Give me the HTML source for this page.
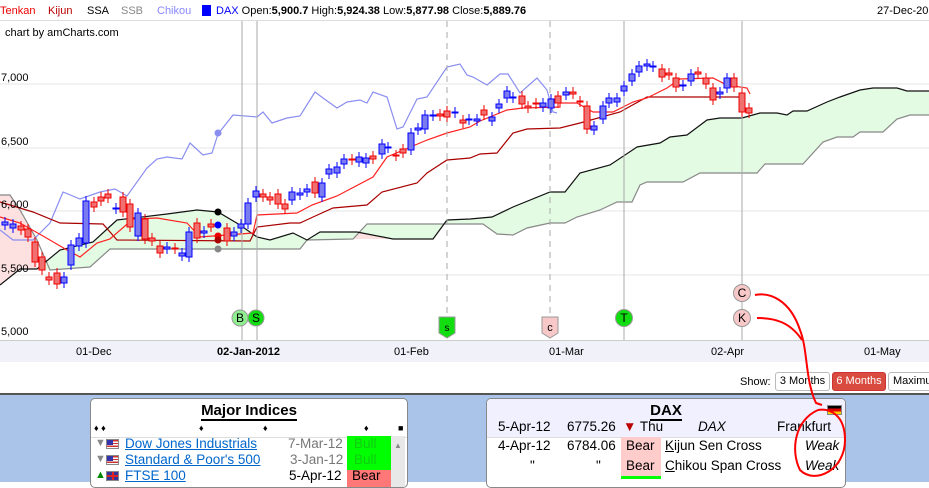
<!DOCTYPE html>
<html><head><meta charset="utf-8">
<style>
*{margin:0;padding:0;box-sizing:border-box}
body{width:929px;height:482px;overflow:hidden;background:#fff;font-family:"Liberation Sans",sans-serif;position:relative}
.top{position:absolute;left:0;top:0;width:929px;height:21px;border-bottom:1px solid #ddd;font-size:11px;line-height:22px;white-space:nowrap}
.top span{position:absolute;top:0}
.lbl{position:absolute;font-size:11px;color:#000}
.axis{position:absolute;left:0;top:340px;width:929px;height:22px;background:#f1f1fa;border-top:1px solid #ccc}
.blue{position:absolute;left:0;top:393px;width:929px;height:89px;background:#a9c4e8;border-top:2px solid #555}
.panel{position:absolute;background:#fff;border:1px solid #888;border-radius:5px;top:398px;height:90px;overflow:hidden;font-size:13.5px}
.panel div{position:absolute;white-space:nowrap}
.btn{position:absolute;top:372px;height:19px;border:1px solid #bbb;border-radius:3px;font-size:11px;line-height:17px;text-align:center;background:#fff}
.us{width:13px;height:10px;background:repeating-linear-gradient(#c33 0 1.4px,#fff 1.4px 2.8px);border:1px solid #888}
.us::before{content:"";position:absolute;left:0;top:0;width:6px;height:5px;background:#33a}
.uk{width:13px;height:10px;background:#339;border:1px solid #888}
.uk::before{content:"";position:absolute;left:5px;top:0;width:2px;height:8px;background:#d22}
.uk::after{content:"";position:absolute;left:0;top:3px;width:11px;height:2px;background:#d22}
</style></head><body>
<div class="top">
<span style="left:0;color:#e00">Tenkan</span>
<span style="left:48px;color:#b00">Kijun</span>
<span style="left:87px">SSA</span>
<span style="left:121px;color:#888">SSB</span>
<span style="left:157px;color:#88f">Chikou</span>
<span style="left:202px;top:5px;width:9px;height:11px;background:#00f"></span>
<span style="left:216px"><span style="position:static;color:#00f">DAX</span> Open:<b>5,900.7</b> High:<b>5,924.38</b> Low:<b>5,877.98</b> Close:<b>5,889.76</b></span>
<span style="left:877px">27-Dec-201</span>
</div>
<div class="lbl" style="left:5px;top:27px">chart by amCharts.com</div>
<svg style="position:absolute;left:0;top:21px" width="929" height="320" viewBox="0 21 929 320">
<g stroke="#e4e4e4"><line x1="0" y1="84" x2="929" y2="84"/><line x1="0" y1="148" x2="929" y2="148"/><line x1="0" y1="211" x2="929" y2="211"/><line x1="0" y1="275" x2="929" y2="275"/></g>
<polygon fill="#fde0e0" points="0,195 10,195 20,210 37,240 37,269 20,269 0,285"/>
<polygon fill="#fde0e0" points="353,239 367,224 470,224 460,219 447,220 433,239"/>
<polygon fill="#e3fbe3" points="37,269 60,250 93,242 117,220 167,214 197,210 218,212 240,225 257,237 270,240 293,233 307,240 320,232 357,232 393,239 433,239 447,220 470,219 492,217 513,207 550,192 565,192 580,173 610,165 637,147 660,143 670,137 687,135 707,120 720,118 742,118 760,113 777,113 787,115 793,111 807,111 827,102 840,97 860,90 873,88 897,88 907,91 929,91 929,115 910,115 897,119 883,132 860,132 853,137 837,137 823,142 803,164 765,164 757,173 700,173 683,182 647,182 640,185 632,202 617,202 600,210 577,217 565,223 550,223 527,228 513,235 497,234 483,224 367,224 353,239 307,240 300,249 110,249 90,267 50,270"/>
<polyline fill="none" stroke="#888" stroke-width="1.2" points="0,195 10,195 20,210 37,240 50,270 90,267 110,249 300,249 307,240 353,239 367,224 483,224 497,234 513,235 527,228 550,223 565,223 577,217 600,210 617,202 632,202 640,185 647,182 683,182 700,173 757,173 765,164 803,164 823,142 837,137 853,137 860,132 883,132 897,119 910,115 929,115"/>
<polyline fill="none" stroke="#111" stroke-width="1.2" points="0,285 20,269 37,269 60,250 93,242 117,220 167,214 197,210 218,212 240,225 257,237 270,240 293,233 307,240 320,232 357,232 393,239 433,239 447,220 470,219 492,217 513,207 550,192 565,192 580,173 610,165 637,147 660,143 670,137 687,135 707,120 720,118 742,118 760,113 777,113 787,115 793,111 807,111 827,102 840,97 860,90 873,88 897,88 907,91 929,91"/>
<polyline fill="none" stroke="#8a8ef0" stroke-width="1.2" points="0,230 13,240 33,240 50,223 63,192 80,199 100,192 115,189 127,196 147,168 157,159 167,157 182,159 190,143 203,155 212,153 218,134 233,115 257,117 263,112 272,123 287,118 300,116 315,92 323,98 337,108 347,102 360,100 367,103 373,92 387,97 397,129 403,127 417,99 427,97 447,67 460,64 467,75 473,77 487,85 500,74 508,74 520,93 537,78 547,90 553,112 557,113"/>
<polyline fill="none" stroke="#a00" stroke-width="1.2" points="0,202 33,212 60,223 103,224 117,240 250,241 257,227 290,223 300,223 313,217 333,208 367,205 382,192 417,183 427,173 447,160 470,158 480,154 497,153 513,133 527,129 560,128 580,123 620,112 647,97 740,97"/>
<polyline fill="none" stroke="#f22" stroke-width="1.2" points="0,217 20,223 43,236 67,250 80,257 97,243 110,239 133,219 157,218 187,223 200,237 253,233 257,215 297,213 312,205 337,196 373,177 387,157 427,140 447,133 470,127 480,121 507,110 523,108 560,107 560,103 577,103 593,112 613,112 633,102 647,98 667,88 680,79 713,78 727,85 747,88 750,94"/>
<g stroke="#aaa"><line x1="242" y1="21" x2="242" y2="340"/><line x1="257" y1="21" x2="257" y2="340"/><line x1="624" y1="21" x2="624" y2="340"/><line x1="742" y1="21" x2="742" y2="340"/><line x1="447" y1="21" x2="447" y2="340" stroke-dasharray="6,5"/><line x1="550" y1="21" x2="550" y2="340" stroke-dasharray="6,5"/></g>
<g id="cd"></g>
<circle cx="218" cy="133" r="3.5" fill="#8a8ef0"/>
<circle cx="218" cy="212" r="3.5" fill="#000"/><circle cx="218" cy="225" r="3.5" fill="#00f"/><circle cx="218" cy="236" r="3.5" fill="#e00"/><circle cx="218" cy="240" r="3.5" fill="#a00"/><circle cx="218" cy="249" r="3.5" fill="#888"/>
<g font-size="12" text-anchor="middle" font-family="Liberation Sans">
<circle cx="240" cy="318" r="8" fill="#90ee90" stroke="#999"/><text x="240" y="322">B</text>
<circle cx="256" cy="318" r="8" fill="#11dd11" stroke="#999"/><text x="256" y="322">S</text>
<circle cx="624" cy="318" r="8.5" fill="#11dd11" stroke="#999"/><text x="624" y="322">T</text>
<circle cx="742" cy="293" r="8.5" fill="#f8c8c8" stroke="#999"/><text x="742" y="297">C</text>
<circle cx="742" cy="318" r="8.5" fill="#f8c8c8" stroke="#999"/><text x="742" y="322">K</text>
<polygon points="439,317 455,317 455,333 447,338 439,333" fill="#11dd11" stroke="#999"/><text x="447" y="331" font-size="10">s</text>
<polygon points="542,317 558,317 558,333 550,338 542,333" fill="#f8c8c8" stroke="#999"/><text x="550" y="331" font-size="11">c</text>
</g>
<g font-size="11" font-family="Liberation Sans"><text x="1" y="81">7,000</text><text x="1" y="145">6,500</text><text x="1" y="208">6,000</text><text x="1" y="272">5,500</text><text x="1" y="335">5,000</text></g>
</svg>
<div class="axis"></div>
<div class="lbl" style="left:76px;top:346px">01-Dec</div>
<div class="lbl" style="left:217px;top:346px;font-weight:bold">02-Jan-2012</div>
<div class="lbl" style="left:394px;top:346px">01-Feb</div>
<div class="lbl" style="left:549px;top:346px">01-Mar</div>
<div class="lbl" style="left:711px;top:346px">02-Apr</div>
<div class="lbl" style="left:864px;top:346px">01-May</div>
<div class="lbl" style="left:740px;top:376px">Show:</div>
<div class="btn" style="left:775px;width:55px">3 Months</div>
<div class="btn" style="left:832px;width:54px;background:#d84b3e;color:#fff;border-color:#c33">6 Months</div>
<div class="btn" style="left:888px;width:50px;text-align:left;padding-left:4px">Maximum</div>
<div class="blue"></div>
<div class="panel" style="left:90px;width:318px">
<div style="left:0;width:316px;top:3px;text-align:center;font-size:15px;font-weight:bold"><span style="border-bottom:2px solid #000">Major Indices</span></div>
<div style="left:3px;top:24px;font-size:9px">♦ ♦</div><div style="left:108px;top:24px;font-size:9px">♦</div><div style="left:172px;top:24px;font-size:9px">♦</div><div style="left:273px;top:24px;font-size:9px">♦</div><div style="left:307px;top:24px;font-size:9px">■</div>
<div style="left:0;top:38px;width:316px;border-top:1px solid #ddd;height:1px"></div>
<div style="left:256px;top:37px;width:44px;height:34px;background:#0f0"></div>
<div style="left:256px;top:71px;width:44px;height:20px;background:#f77"></div>
<div style="left:300px;top:37px;width:14px;height:55px;background:#e8e8e8"></div>
<div style="left:4px;top:38px;color:#888;font-size:11px">▼</div><div class="us" style="left:15px;top:40px"></div>
<div style="left:4px;top:54px;color:#888;font-size:11px">▼</div><div class="us" style="left:15px;top:56px"></div>
<div style="left:4px;top:70px;color:#080;font-size:11px">▲</div><div class="uk" style="left:15px;top:72px"></div>
<div style="left:34px;top:37px;color:#06c;text-decoration:underline">Dow Jones Industrials</div>
<div style="left:34px;top:53px;color:#06c;text-decoration:underline">Standard &amp; Poor's 500</div>
<div style="left:34px;top:69px;color:#06c;text-decoration:underline">FTSE 100</div>
<div style="left:197px;top:37px;color:#777">7-Mar-12</div>
<div style="left:199px;top:53px;color:#777">3-Jan-12</div>
<div style="left:198px;top:69px">5-Apr-12</div>
<div style="left:263px;top:37px;color:#1c1">Bull</div>
<div style="left:263px;top:53px;color:#1c1">Bull</div>
<div style="left:261px;top:69px">Bear</div>
<div style="left:303px;top:42px;font-size:8px;color:#888">▲</div>
</div>
<div class="panel" style="left:486px;width:360px">
<div style="left:0;top:0;width:360px;height:38px;background:#f0f0ff"></div>
<div style="left:0;width:358px;top:3px;text-align:center;font-size:15px;font-weight:bold"><span style="border-bottom:2px solid #000">DAX</span></div>
<div style="right:3px;top:6px;width:15px;height:10px;background:linear-gradient(#000 33%,#d00 33%,#d00 66%,#fc0 66%);border:1px solid #888"></div>
<div style="left:0;top:38px;width:360px;border-top:1px solid #ddd;height:1px"></div>
<div style="left:11px;top:20px">5-Apr-12</div>
<div style="left:80px;top:20px">6775.26</div>
<div style="left:136px;top:20px"><span style="color:#b00">▼</span> Thu</div>
<div style="left:211px;top:20px;font-style:italic">DAX</div>
<div style="left:290px;top:20px">Frankfurt</div>
<div style="left:134px;top:38px;width:40px;height:40px;background:#fcc"></div>
<div style="left:134px;top:77px;width:40px;height:3px;background:#0f0"></div>
<div style="left:11px;top:39px">4-Apr-12</div>
<div style="left:80px;top:39px">6784.06</div>
<div style="left:139px;top:39px">Bear</div>
<div style="left:178px;top:39px"><u>K</u>ijun Sen Cross</div>
<div style="left:318px;top:39px;font-style:italic">Weak</div>
<div style="left:43px;top:59px">"</div>
<div style="left:109px;top:59px">"</div>
<div style="left:139px;top:59px">Bear</div>
<div style="left:178px;top:59px"><u>C</u>hikou Span Cross</div>
<div style="left:318px;top:59px;font-style:italic">Weak</div>
</div>
<svg style="position:absolute;left:0;top:0" width="929" height="482"><g fill="none" stroke="#f00" stroke-width="2"><path d="M755,295 C770,292 790,300 800,330 C808,350 805,380 816,403 L822,405"/><path d="M757,318 C775,318 790,322 802,340"/><path d="M818,410 C795,420 790,450 800,470 C815,485 845,470 845,440 C845,415 830,408 818,410"/></g></svg>
<script>
var c=[[5,222,225,'b'],[13,224,228,'b'],[21,226,230,'r'],[28,229,237,'r'],[35,242,262,'r'],[42,257,270,'r'],[49,277,280,'r'],[57,273,284,'r'],[64,277,283,'b'],[71,245,265,'b'],[79,238,246,'b'],[86,201,243,'b'],[94,202,207,'r'],[101,197,201,'r'],[108,194,198,'r'],[116,208,209,'b'],[123,197,212,'r'],[130,204,227,'r'],[138,213,236,'b'],[145,219,239,'r'],[152,238,241,'r'],[160,246,253,'r'],[167,247,249,'b'],[175,248,249,'r'],[182,253,256,'b'],[189,232,257,'b'],[197,223,238,'r'],[204,231,233,'b'],[211,224,227,'r'],[227,228,241,'r'],[234,232,236,'b'],[241,224,228,'b'],[248,203,224,'b'],[256,191,197,'b'],[263,194,197,'r'],[270,197,200,'r'],[278,194,204,'r'],[285,204,209,'r'],[292,192,200,'b'],[300,193,195,'b'],[307,189,192,'b'],[315,182,193,'r'],[322,183,197,'b'],[329,169,174,'b'],[337,167,173,'b'],[344,159,164,'b'],[352,159,160,'r'],[359,157,162,'b'],[366,158,163,'b'],[373,156,159,'r'],[382,144,154,'b'],[388,147,148,'b'],[396,155,156,'r'],[403,149,153,'r'],[411,133,150,'b'],[418,128,130,'b'],[425,115,129,'b'],[433,115,116,'b'],[440,114,116,'r'],[447,111,117,'r'],[455,112,113,'b'],[463,120,123,'r'],[469,119,120,'b'],[477,119,121,'b'],[484,110,115,'r'],[492,117,121,'b'],[499,104,108,'b'],[507,91,98,'b'],[513,97,98,'b'],[522,96,104,'r'],[528,106,108,'r'],[536,103,104,'r'],[543,103,107,'b'],[551,99,108,'b'],[558,96,103,'r'],[566,92,95,'b'],[573,92,94,'r'],[580,101,102,'r'],[587,106,129,'r'],[594,126,130,'b'],[603,106,119,'b'],[609,98,103,'b'],[617,98,102,'b'],[624,86,91,'b'],[632,74,81,'b'],[639,66,72,'b'],[647,64,66,'b'],[653,66,67,'b'],[662,69,77,'r'],[669,73,75,'r'],[676,78,87,'r'],[683,85,86,'b'],[691,74,81,'b'],[698,72,74,'r'],[706,78,84,'r'],[713,88,100,'r'],[720,92,94,'b'],[727,78,88,'b'],[734,78,87,'r'],[742,93,112,'r'],[749,108,113,'r']];
var s='';c.forEach(function(k){var r=k[3]=='r',st=r?'#e00':'#00f',f=r?'#f07070':'#7b7bf0';s+='<line x1="'+k[0]+'" x2="'+k[0]+'" y1="'+(k[1]-5)+'" y2="'+(k[2]+5)+'" stroke="'+st+'"/><rect x="'+(k[0]-3)+'" y="'+k[1]+'" width="6" height="'+Math.max(1,k[2]-k[1])+'" fill="'+f+'" stroke="'+st+'"/>';});
document.getElementById('cd').innerHTML=s;
</script>
</body></html>
